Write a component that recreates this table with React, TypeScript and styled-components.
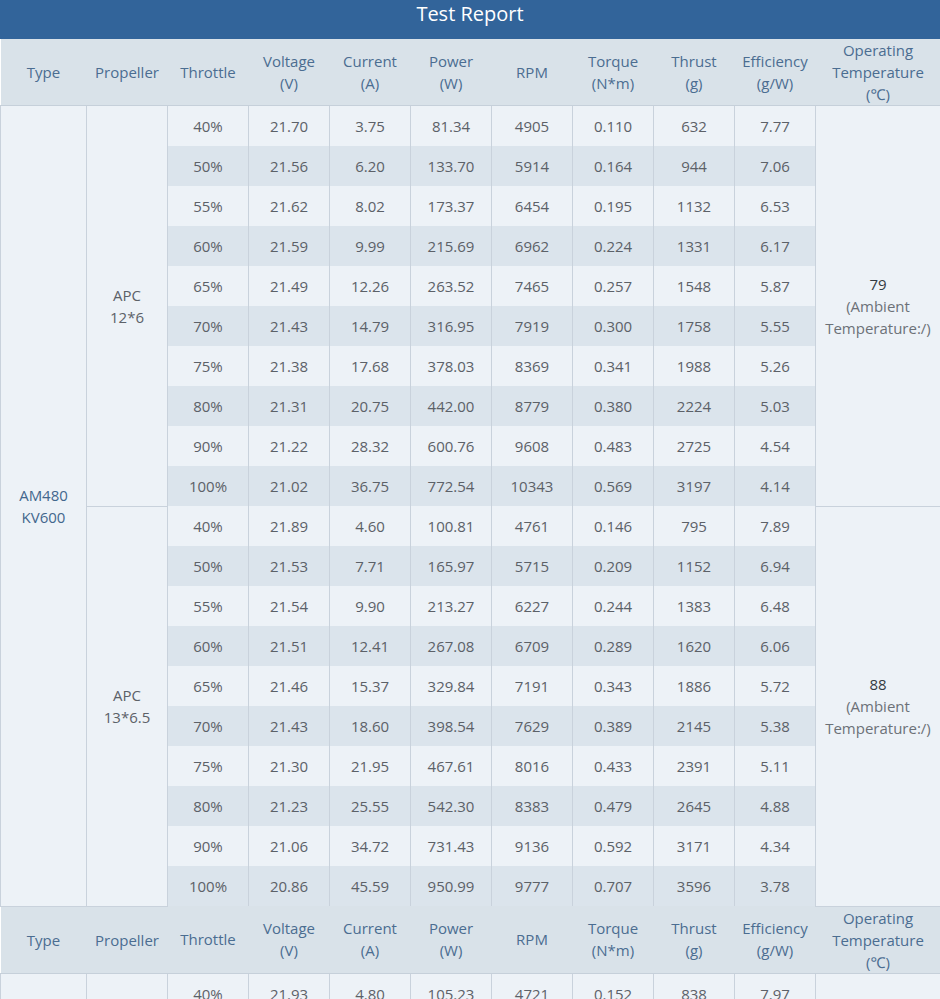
import * as React from 'react';
import styled, { createGlobalStyle } from 'styled-components';

const GlobalStyle = createGlobalStyle`
  body {
    margin: 0;
    background: #ffffff;
    font-family: 'Open Sans', 'Noto Sans', sans-serif;
  }
`;

type Row = [string, string, string, string, string, string, string, string];

interface Group {
  type: string[];
  propeller: string[];
  temp: string;
  rows: Row[];
}

const groups: Group[] = [
  {
    type: ['AM480', 'KV600'],
    propeller: ['APC', '12*6'],
    temp: '79',
    rows: [
      ['40%', '21.70', '3.75', '81.34', '4905', '0.110', '632', '7.77'],
      ['50%', '21.56', '6.20', '133.70', '5914', '0.164', '944', '7.06'],
      ['55%', '21.62', '8.02', '173.37', '6454', '0.195', '1132', '6.53'],
      ['60%', '21.59', '9.99', '215.69', '6962', '0.224', '1331', '6.17'],
      ['65%', '21.49', '12.26', '263.52', '7465', '0.257', '1548', '5.87'],
      ['70%', '21.43', '14.79', '316.95', '7919', '0.300', '1758', '5.55'],
      ['75%', '21.38', '17.68', '378.03', '8369', '0.341', '1988', '5.26'],
      ['80%', '21.31', '20.75', '442.00', '8779', '0.380', '2224', '5.03'],
      ['90%', '21.22', '28.32', '600.76', '9608', '0.483', '2725', '4.54'],
      ['100%', '21.02', '36.75', '772.54', '10343', '0.569', '3197', '4.14'],
    ],
  },
  {
    type: ['AM480', 'KV600'],
    propeller: ['APC', '13*6.5'],
    temp: '88',
    rows: [
      ['40%', '21.89', '4.60', '100.81', '4761', '0.146', '795', '7.89'],
      ['50%', '21.53', '7.71', '165.97', '5715', '0.209', '1152', '6.94'],
      ['55%', '21.54', '9.90', '213.27', '6227', '0.244', '1383', '6.48'],
      ['60%', '21.51', '12.41', '267.08', '6709', '0.289', '1620', '6.06'],
      ['65%', '21.46', '15.37', '329.84', '7191', '0.343', '1886', '5.72'],
      ['70%', '21.43', '18.60', '398.54', '7629', '0.389', '2145', '5.38'],
      ['75%', '21.30', '21.95', '467.61', '8016', '0.433', '2391', '5.11'],
      ['80%', '21.23', '25.55', '542.30', '8383', '0.479', '2645', '4.88'],
      ['90%', '21.06', '34.72', '731.43', '9136', '0.592', '3171', '4.34'],
      ['100%', '20.86', '45.59', '950.99', '9777', '0.707', '3596', '3.78'],
    ],
  },
];

const lowerGroup: Group = {
  type: ['AM480', 'KV600'],
  propeller: ['APC', '14*7'],
  temp: '93',
  rows: [
    ['40%', '21.93', '4.80', '105.23', '4721', '0.152', '838', '7.97'],
    ['50%', '21.62', '8.11', '175.34', '5650', '0.218', '1201', '6.85'],
    ['55%', '21.58', '10.45', '225.51', '6148', '0.256', '1433', '6.35'],
    ['60%', '21.53', '13.10', '282.04', '6615', '0.301', '1681', '5.96'],
  ],
};

const headers: string[][] = [
  ['Type'],
  ['Propeller'],
  ['Throttle'],
  ['Voltage', '(V)'],
  ['Current', '(A)'],
  ['Power', '(W)'],
  ['RPM'],
  ['Torque', '(N*m)'],
  ['Thrust', '(g)'],
  ['Efficiency', '(g/W)'],
  ['Operating', 'Temperature', '(℃)'],
];

const colWidths = [86, 81, 81, 81, 81, 81, 81, 81, 81, 81, 125];

const Page = styled.div`
  width: 940px;
`;

const TitleBar = styled.div`
  height: 39px;
  background: #32649a;
  color: #ffffff;
  font-size: 20px;
  line-height: 27px;
  text-align: center;
`;

const Table = styled.table`
  width: 940px;
  border-collapse: collapse;
  table-layout: fixed;
  font-size: 15px;
`;

const HeadCell = styled.th`
  height: 66px;
  padding: 0;
  background: #d9e2e9;
  color: #4b6d91;
  font-weight: 400;
  line-height: 22px;
  text-align: center;
  vertical-align: middle;
  border-bottom: 1px solid #c6d0da;
`;

const DataCell = styled.td<{ $shade: boolean }>`
  height: 40px;
  padding: 0;
  background: ${(p) => (p.$shade ? '#dbe4ec' : '#edf2f7')};
  color: #5c6168;
  text-align: center;
  vertical-align: middle;
  border-left: 1px solid #c9d2dc;
  border-right: 1px solid #c9d2dc;
`;

const SpanCell = styled.td<{ $tone: 'type' | 'plain' }>`
  padding: 0;
  background: #edf2f7;
  color: ${(p) => (p.$tone === 'type' ? '#43678d' : '#5c6168')};
  line-height: 22px;
  text-align: center;
  vertical-align: middle;
  border: 1px solid #c9d2dc;
`;

const TempValue = styled.div`
  color: #333a42;
`;

const TempNote = styled.div`
  color: #6c7178;
`;

const Lines: React.FC<{ lines: string[] }> = ({ lines }) => (
  <>
    {lines.map((l, i) => (
      <div key={i}>{l}</div>
    ))}
  </>
);

const HeaderRow: React.FC = () => (
  <tr>
    {headers.map((h, i) => (
      <HeadCell key={i}>
        <Lines lines={h} />
      </HeadCell>
    ))}
  </tr>
);

const GroupRows: React.FC<{ group: Group; withType: boolean; typeSpan: number }> = ({
  group,
  withType,
  typeSpan,
}) => (
  <>
    {group.rows.map((row, i) => (
      <tr key={i}>
        {i === 0 && withType && (
          <SpanCell $tone="type" rowSpan={typeSpan}>
            <Lines lines={group.type} />
          </SpanCell>
        )}
        {i === 0 && (
          <SpanCell $tone="plain" rowSpan={group.rows.length}>
            <Lines lines={group.propeller} />
          </SpanCell>
        )}
        {row.map((v, j) => (
          <DataCell key={j} $shade={i % 2 === 1}>
            {v}
          </DataCell>
        ))}
        {i === 0 && (
          <SpanCell $tone="plain" rowSpan={group.rows.length}>
            <TempValue>{group.temp}</TempValue>
            <TempNote>(Ambient</TempNote>
            <TempNote>Temperature:/)</TempNote>
          </SpanCell>
        )}
      </tr>
    ))}
  </>
);

const App: React.FC = () => {
  const totalRows = groups.reduce((n, g) => n + g.rows.length, 0);
  return (
    <Page>
      <GlobalStyle />
      <TitleBar>Test Report</TitleBar>
      <Table>
        <colgroup>
          {colWidths.map((w, i) => (
            <col key={i} style={{ width: w }} />
          ))}
        </colgroup>
        <tbody>
          <HeaderRow />
          {groups.map((g, i) => (
            <GroupRows key={i} group={g} withType={i === 0} typeSpan={totalRows} />
          ))}
          <HeaderRow />
          <GroupRows group={lowerGroup} withType typeSpan={lowerGroup.rows.length} />
        </tbody>
      </Table>
    </Page>
  );
};

export default App;
